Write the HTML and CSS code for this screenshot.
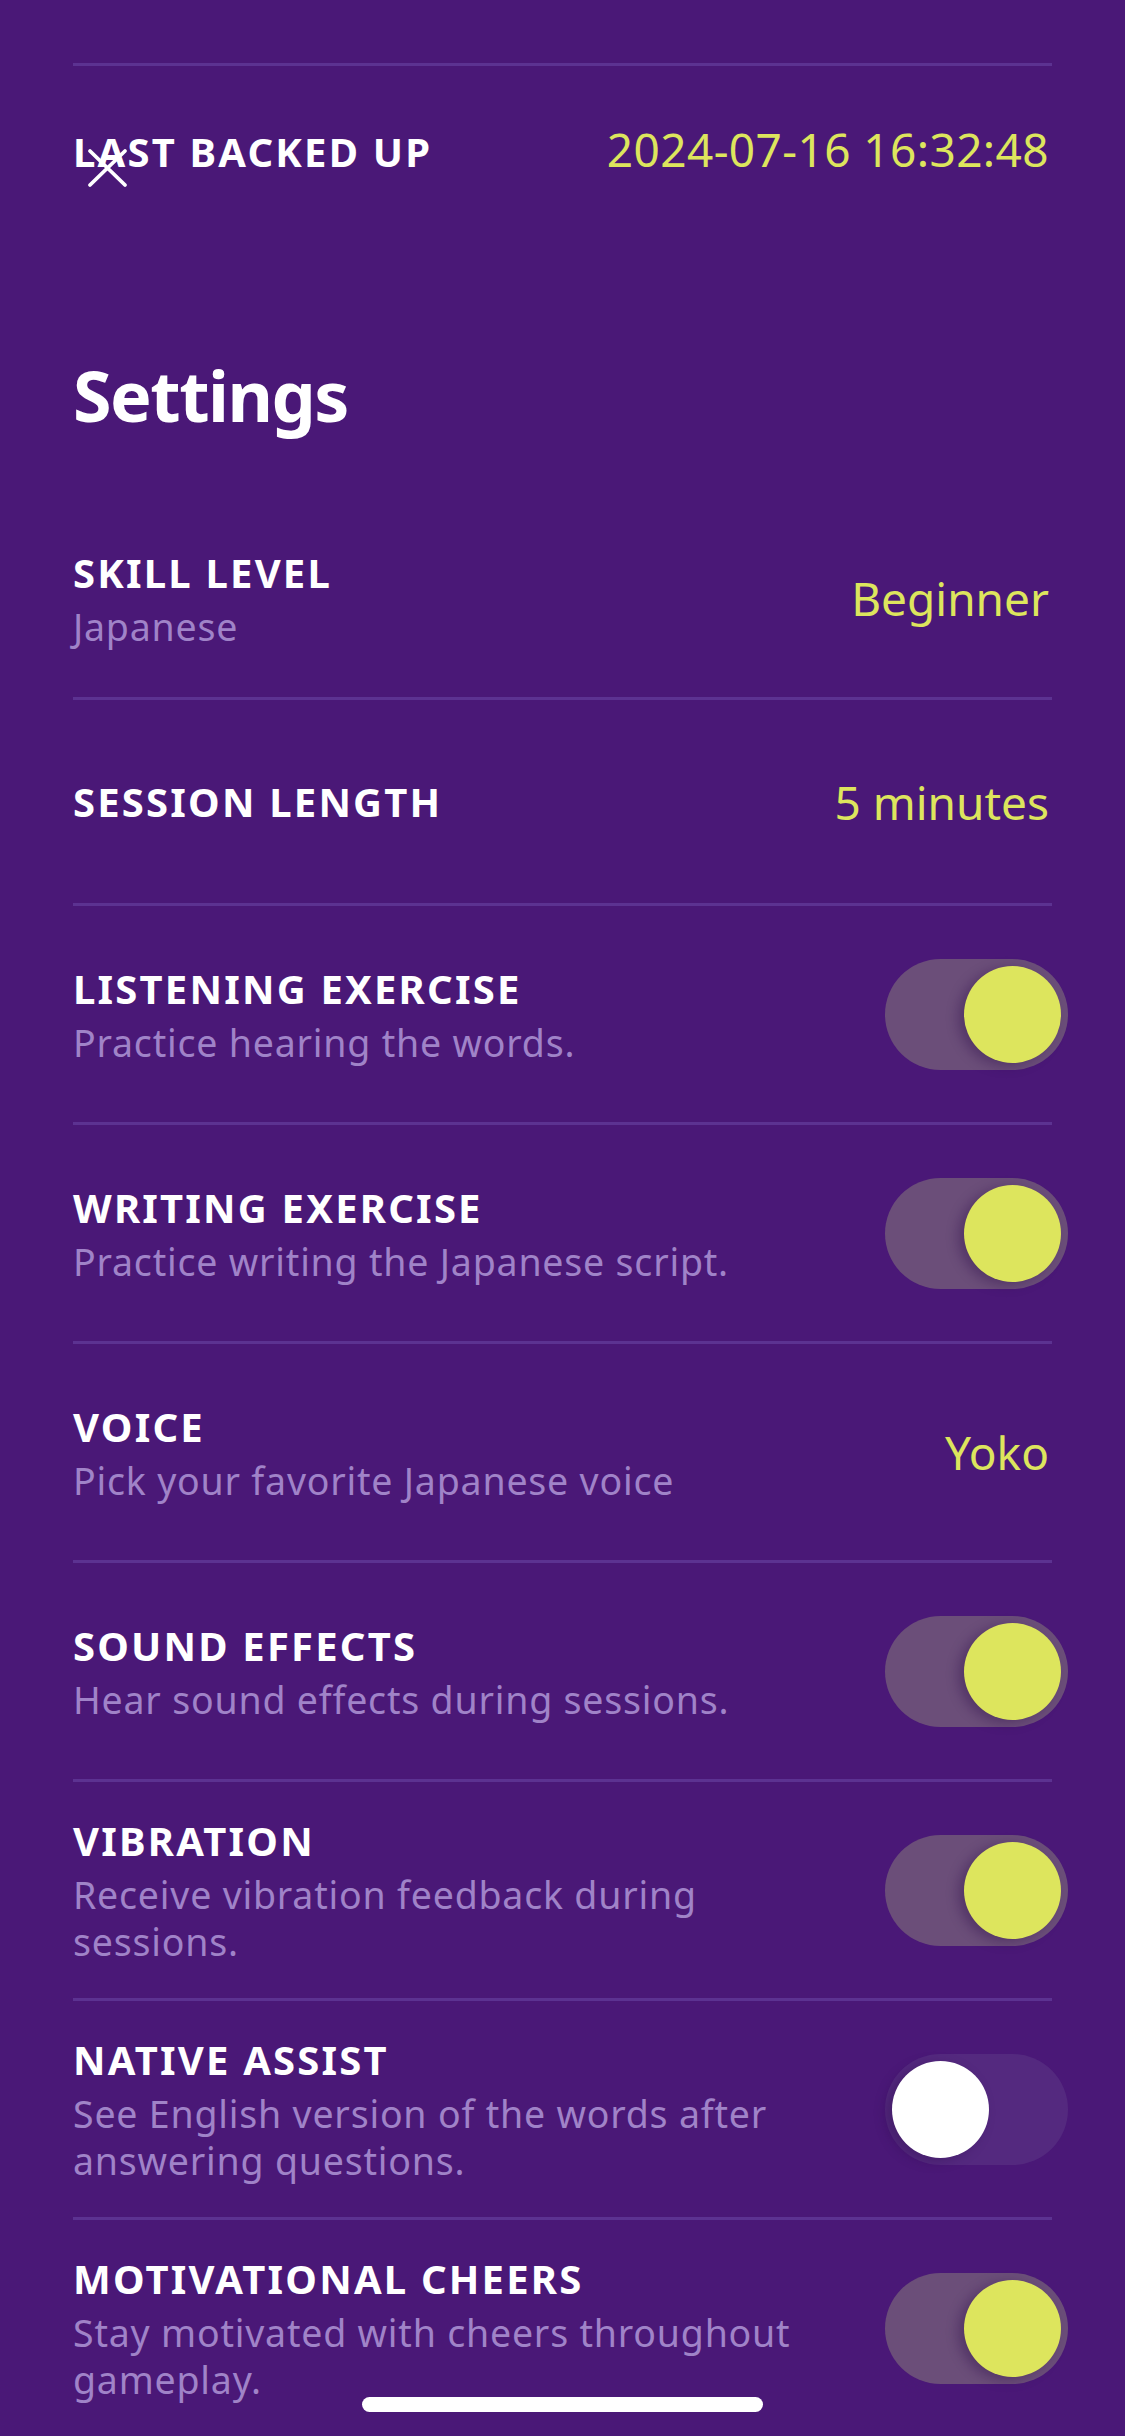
FILE: index.html
```html
<!DOCTYPE html>
<html lang="en">
<head>
<meta charset="utf-8">
<title>Settings</title>
<link rel="stylesheet" href="styles.css">
</head>
<body>
<div class="screen">
  <div class="backup-row">
    <span class="label">LAST BACKED UP</span>
    <span class="value value--date">2024-07-16 16:32:48</span>
  </div>
  <button class="close" aria-label="Close">
    <svg viewBox="0 0 41 40" width="41" height="40"><path d="M3 3 L38 37 M38 3 L3 37" stroke="#fff" stroke-width="3.8" stroke-linecap="round" fill="none"/></svg>
  </button>
  <h1 class="heading">Settings</h1>
  <ul class="list">
    <li class="row row--first">
      <div class="text"><div class="title">SKILL LEVEL</div><div class="sub">Japanese</div></div>
      <span class="value">Beginner</span>
    </li>
    <li class="row row--short">
      <div class="text"><div class="title">SESSION LENGTH</div></div>
      <span class="value">5 minutes</span>
    </li>
    <li class="row">
      <div class="text"><div class="title">LISTENING EXERCISE</div><div class="sub">Practice hearing the words.</div></div>
      <span class="toggle toggle--on"><span class="knob"></span></span>
    </li>
    <li class="row">
      <div class="text"><div class="title">WRITING EXERCISE</div><div class="sub">Practice writing the Japanese script.</div></div>
      <span class="toggle toggle--on"><span class="knob"></span></span>
    </li>
    <li class="row">
      <div class="text"><div class="title">VOICE</div><div class="sub">Pick your favorite Japanese voice</div></div>
      <span class="value">Yoko</span>
    </li>
    <li class="row">
      <div class="text"><div class="title">SOUND EFFECTS</div><div class="sub">Hear sound effects during sessions.</div></div>
      <span class="toggle toggle--on"><span class="knob"></span></span>
    </li>
    <li class="row">
      <div class="text"><div class="title">VIBRATION</div><div class="sub">Receive vibration feedback during sessions.</div></div>
      <span class="toggle toggle--on"><span class="knob"></span></span>
    </li>
    <li class="row">
      <div class="text"><div class="title">NATIVE ASSIST</div><div class="sub">See English version of the words after answering questions.</div></div>
      <span class="toggle"><span class="knob"></span></span>
    </li>
    <li class="row">
      <div class="text"><div class="title">MOTIVATIONAL CHEERS</div><div class="sub">Stay motivated with cheers throughout gameplay.</div></div>
      <span class="toggle toggle--on"><span class="knob"></span></span>
    </li>
  </ul>
  <div class="home-indicator"></div>
</div>
</body>
</html>
```
FILE: styles.css
```css
* { box-sizing: border-box; }
html, body { margin: 0; padding: 0; }
body {
  background: #4a1877;
  font-family: "Noto Sans", Lato, sans-serif;
  color: #fff;
}
.screen {
  position: relative;
  width: 1125px;
  height: 2436px;
  overflow: hidden;
  padding: 63px 73px 0;
}
.backup-row {
  display: flex;
  justify-content: space-between;
  align-items: baseline;
  height: 153px;
  padding-top: 55px;
  border-top: 3px solid #5c3291;
}
.label, .title {
  font-size: 40px;
  font-weight: 700;
  line-height: 52px;
  letter-spacing: 2.2px;
  white-space: nowrap;
}
.value {
  margin-right: 3px;
  font-size: 46px;
  line-height: 56px;
  color: #dde55d;
  white-space: nowrap;
}
.value--date { letter-spacing: 0.4px; }
.close {
  position: absolute;
  left: 87px;
  top: 148px;
  width: 41px;
  height: 40px;
  padding: 0;
  border: 0;
  background: none;
}
.close svg { display: block; }
.heading {
  margin: 139px 0 46px;
  font-size: 70px;
  line-height: 80px;
  font-weight: 700;
  letter-spacing: -1.5px;
}
.list { list-style: none; margin: 0; padding: 0; }
.row {
  display: flex;
  align-items: center;
  justify-content: space-between;
  gap: 40px;
  height: 219px;
  border-bottom: 3px solid #5c3291;
}
.row--first { padding-top: 18px; }
.row--short { height: 206px; }
.text { flex: 1; min-width: 0; }
.sub {
  margin-top: 4px;
  font-size: 37.5px;
  line-height: 47px;
  letter-spacing: 0.8px;
  color: #a083c8;
}
.toggle {
  flex: none;
  display: flex;
  align-items: center;
  justify-content: flex-start;
  width: 183px;
  height: 111px;
  padding: 0 7px;
  margin-right: -16px;
  border-radius: 56px;
  background: #54297f;
}
.toggle--on {
  justify-content: flex-end;
  background: #6b4e79;
}
.knob {
  width: 97px;
  height: 97px;
  border-radius: 50%;
  background: #fff;
  box-shadow: -6px 3px 12px rgba(40, 8, 70, 0.35);
}
.toggle--on .knob { background: #dde55d; }
.home-indicator {
  position: absolute;
  left: 362px;
  bottom: 24px;
  width: 401px;
  height: 15px;
  border-radius: 8px;
  background: #fff;
}
```
